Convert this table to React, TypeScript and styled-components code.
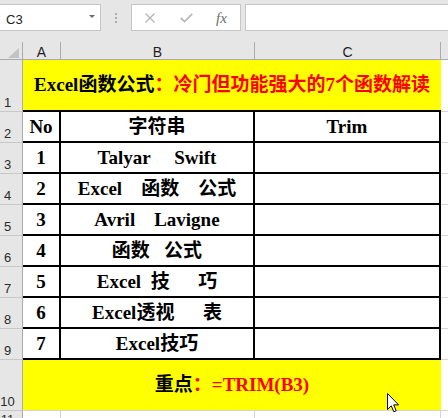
import React from 'react';
import styled, { createGlobalStyle, css } from 'styled-components';

const GlobalStyle = createGlobalStyle`
  html, body { margin: 0; padding: 0; background: #fff; }
  body { font-family: "Liberation Sans", Arial, sans-serif; overflow: hidden; }
`;

const Window = styled.div`
  position: relative;
  width: 448px;
  height: 418px;
  overflow: hidden;
  background: #e6e6e6;
  display: flex;
  flex-direction: column;
`;

const FormulaBar = styled.div`
  height: 42px;
  flex: none;
  display: flex;
  align-items: flex-start;
  padding-top: 4px;
  box-sizing: border-box;
`;

const Field = styled.div`
  height: 27px;
  box-sizing: border-box;
  background: #fff;
  border: 1px solid #c6c6c6;
  display: flex;
  align-items: center;
  flex: none;
`;

const NameBox = styled(Field)`
  width: 102px;
  margin-left: -1px;
  padding: 0 5px 0 6px;
  justify-content: space-between;
`;

const NameText = styled.span`
  font-size: 13px;
  color: #222;
  padding-top: 4px;
`;

const Caret = styled.span`
  width: 0;
  height: 0;
  border-left: 3px solid transparent;
  border-right: 3px solid transparent;
  border-top: 3px solid #6a6a6a;
  margin-bottom: 2px;
`;

const Grip = styled.div`
  width: 30px;
  height: 27px;
  flex: none;
  display: flex;
  flex-direction: column;
  align-items: center;
  justify-content: center;
  gap: 2px;
`;

const GripDot = styled.span`
  width: 2px;
  height: 2px;
  background: #ababab;
`;

const ButtonBox = styled(Field)`
  width: 110px;
  padding-left: 13px;
  gap: 25px;
`;

const IconSlot = styled.span`
  display: flex;
  align-items: center;
  justify-content: center;
`;

const Fx = styled.span`
  font-family: "Liberation Serif", "Times New Roman", serif;
  font-style: italic;
  font-size: 15px;
  color: #6e6e6e;
  margin-left: -2px;
  padding-top: 1px;
`;

const FormulaInput = styled(Field)`
  flex: 1;
  margin-left: 4px;
  margin-right: -1px;
`;

const Sheet = styled.div`
  flex: none;
  display: grid;
  grid-template-columns: 23px 38px 194px 186px 7px;
  grid-template-rows: 18px 52px repeat(8, 31px) 51px 18px;
`;

const cellBase = css`
  box-sizing: border-box;
  min-width: 0;
  display: flex;
  overflow: hidden;
`;

const Corner = styled.div`
  ${cellBase};
  background: #e6e6e6;
  border-right: 1px solid #ababab;
  border-bottom: 1px solid #ababab;
  align-items: flex-end;
  justify-content: flex-end;
  padding: 0 3px 1px 0;
`;

const CornerMark = styled.span`
  width: 11px;
  height: 10px;
  background: #c3c3c3;
  clip-path: polygon(100% 0, 100% 100%, 0 100%);
`;

const ColHeader = styled.div<{ $last?: boolean }>`
  ${cellBase};
  background: #e6e6e6;
  border-right: ${(p) => (p.$last ? 'none' : '1px solid #ababab')};
  border-bottom: 1px solid #ababab;
  align-items: flex-end;
  justify-content: center;
  font-size: 14px;
  line-height: 13px;
  color: #1e1e1e;
`;

const RowNum = styled.div`
  ${cellBase};
  background: #e6e6e6;
  border-right: 1px solid #ababab;
  border-bottom: 1px solid #c8c8c8;
  align-items: flex-end;
  justify-content: center;
  padding: 0 7px 1px 0;
  font-size: 13px;
  line-height: 15px;
  color: #2a2a2a;
`;

const dataFont = css`
  font-family: "Liberation Serif", "Noto Sans CJK SC", serif;
  font-weight: 700;
  font-size: 19px;
  line-height: 22px;
  white-space: pre;
  color: #000;
`;

const Banner = styled.div<{ $line: 'black' | 'grid' }>`
  ${cellBase};
  ${dataFont};
  grid-column: span 3;
  background: #ffff00;
  border-bottom: ${(p) => (p.$line === 'black' ? '2px solid #000' : '1px solid #d4d4d4')};
  align-items: center;
  justify-content: center;
`;

const Red = styled.span`
  color: #ff0000;
`;

const DataCell = styled.div`
  ${cellBase};
  ${dataFont};
  background: #fff;
  border-right: 2px solid #000;
  border-bottom: 2px solid #000;
  align-items: center;
  justify-content: center;
`;

const Blank = styled.div`
  ${cellBase};
  background: #fff;
  border-bottom: 1px solid #d4d4d4;
`;

const GridCell = styled.div`
  ${cellBase};
  background: #fff;
  border-right: 1px solid #d4d4d4;
  border-bottom: 1px solid #d4d4d4;
`;

const Pointer = styled.svg`
  position: absolute;
  left: 387px;
  top: 393px;
`;

const rows: { n: string; s: string; c?: string }[] = [
  { n: 'No', s: '字符串', c: 'Trim' },
  { n: '1', s: 'Talyar     Swift' },
  { n: '2', s: 'Excel    函数    公式' },
  { n: '3', s: 'Avril    Lavigne' },
  { n: '4', s: '函数   公式' },
  { n: '5', s: 'Excel  技      巧' },
  { n: '6', s: 'Excel透视      表' },
  { n: '7', s: 'Excel技巧' },
];

export default function App() {
  return (
    <>
      <GlobalStyle />
      <Window>
        <FormulaBar>
          <NameBox>
            <NameText>C3</NameText>
            <Caret />
          </NameBox>
          <Grip>
            <GripDot />
            <GripDot />
            <GripDot />
          </Grip>
          <ButtonBox>
            <IconSlot>
              <svg width="10" height="10" viewBox="0 0 10 10">
                <path d="M0.5 0.5 L9.5 9.5 M9.5 0.5 L0.5 9.5" stroke="#b4b4b4" strokeWidth="1.3" fill="none" />
              </svg>
            </IconSlot>
            <IconSlot>
              <svg width="13" height="10" viewBox="0 0 13 10">
                <path d="M0.8 5 L4.5 8.6 L12.3 0.8" stroke="#b9b9b9" strokeWidth="1.8" fill="none" />
              </svg>
            </IconSlot>
            <Fx>fx</Fx>
          </ButtonBox>
          <FormulaInput />
        </FormulaBar>
        <Sheet>
          <Corner>
            <CornerMark />
          </Corner>
          <ColHeader>A</ColHeader>
          <ColHeader>B</ColHeader>
          <ColHeader>C</ColHeader>
          <ColHeader $last />

          <RowNum>1</RowNum>
          <Banner $line="black">
            Excel函数公式<Red>：冷门但功能强大的7个函数解读</Red>
          </Banner>
          <Blank />

          {rows.map((r, i) => (
            <React.Fragment key={i}>
              <RowNum>{i + 2}</RowNum>
              <DataCell>{r.n}</DataCell>
              <DataCell>{r.s}</DataCell>
              <DataCell>{r.c ?? ''}</DataCell>
              <Blank />
            </React.Fragment>
          ))}

          <RowNum>10</RowNum>
          <Banner $line="grid">
            重点<Red>：=TRIM(B3)</Red>
          </Banner>
          <Blank />

          <RowNum>11</RowNum>
          <GridCell />
          <GridCell />
          <GridCell />
          <Blank />
        </Sheet>
        <Pointer width="13" height="20" viewBox="0 0 13 20">
          <path d="M0.5 0.5 L0.5 16.5 L4.3 12.8 L6.8 18.8 L9.2 17.8 L6.7 11.9 L11.6 11.9 Z" fill="#fff" stroke="#000" strokeWidth="1" />
        </Pointer>
      </Window>
    </>
  );
}
